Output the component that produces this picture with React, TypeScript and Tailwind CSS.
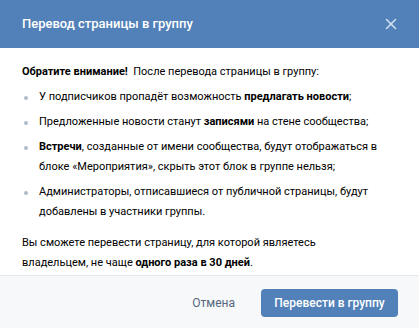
import { X } from "lucide-react";

function Bullet({ children }: { children: React.ReactNode }) {
  return (
    <li className="flex items-start">
      <span className="w-[17px] shrink-0 pt-[9px] pl-[2px]">
        <span className="block w-[4px] h-[4px] rounded-full bg-[#aebbca]" />
      </span>
      <span>{children}</span>
    </li>
  );
}

export default function App() {
  return (
    <div className="w-[419px] h-[328px] bg-white flex flex-col font-['Roboto',sans-serif] text-[11px] leading-[20px] text-black overflow-hidden">
      <div className="h-[48px] shrink-0 bg-[#5181b8] flex items-center justify-between pl-[22px] pr-[19px]">
        <span className="text-white text-[13px] font-medium">Перевод страницы в группу</span>
        <X className="w-[18px] h-[18px] text-[#d3e0ee]" strokeWidth={2} />
      </div>

      <div className="flex-1 pl-[22px] pr-[26px] pt-[14px]">
        <p>
          <b className="font-bold">Обратите внимание!</b>&nbsp; После перевода страницы в группу:
        </p>
        <ul className="mt-[5px] flex flex-col gap-[5px]">
          <Bullet>
            У подписчиков пропадёт возможность <b className="font-bold">предлагать новости</b>;
          </Bullet>
          <Bullet>
            Предложенные новости станут <b className="font-bold">записями</b> на стене сообщества;
          </Bullet>
          <Bullet>
            <b className="font-bold">Встречи</b>, созданные от имени сообщества, будут отображаться в блоке «Мероприятия», скрыть этот блок в группе нельзя;
          </Bullet>
          <Bullet>
            Администраторы, отписавшиеся от публичной страницы, будут добавлены в участники группы.
          </Bullet>
        </ul>
        <p className="mt-[11px] pr-[40px]">
          Вы сможете перевести страницу, для которой являетесь владельцем, не чаще <b className="font-bold">одного раза в 30 дней</b>.
        </p>
      </div>

      <div className="h-[53px] shrink-0 border-t border-[#e7e8ec] bg-[#f7f8fa] flex items-start justify-end pt-[13px] pr-[21px]">
        <button className="h-[28px] px-[13px] text-[12px] text-[#55677d] mr-[13px]">Отмена</button>
        <button className="h-[28px] w-[137px] rounded-[4px] bg-[#5181b8] text-white text-[12px] font-medium">
          Перевести в группу
        </button>
      </div>
    </div>
  );
}
